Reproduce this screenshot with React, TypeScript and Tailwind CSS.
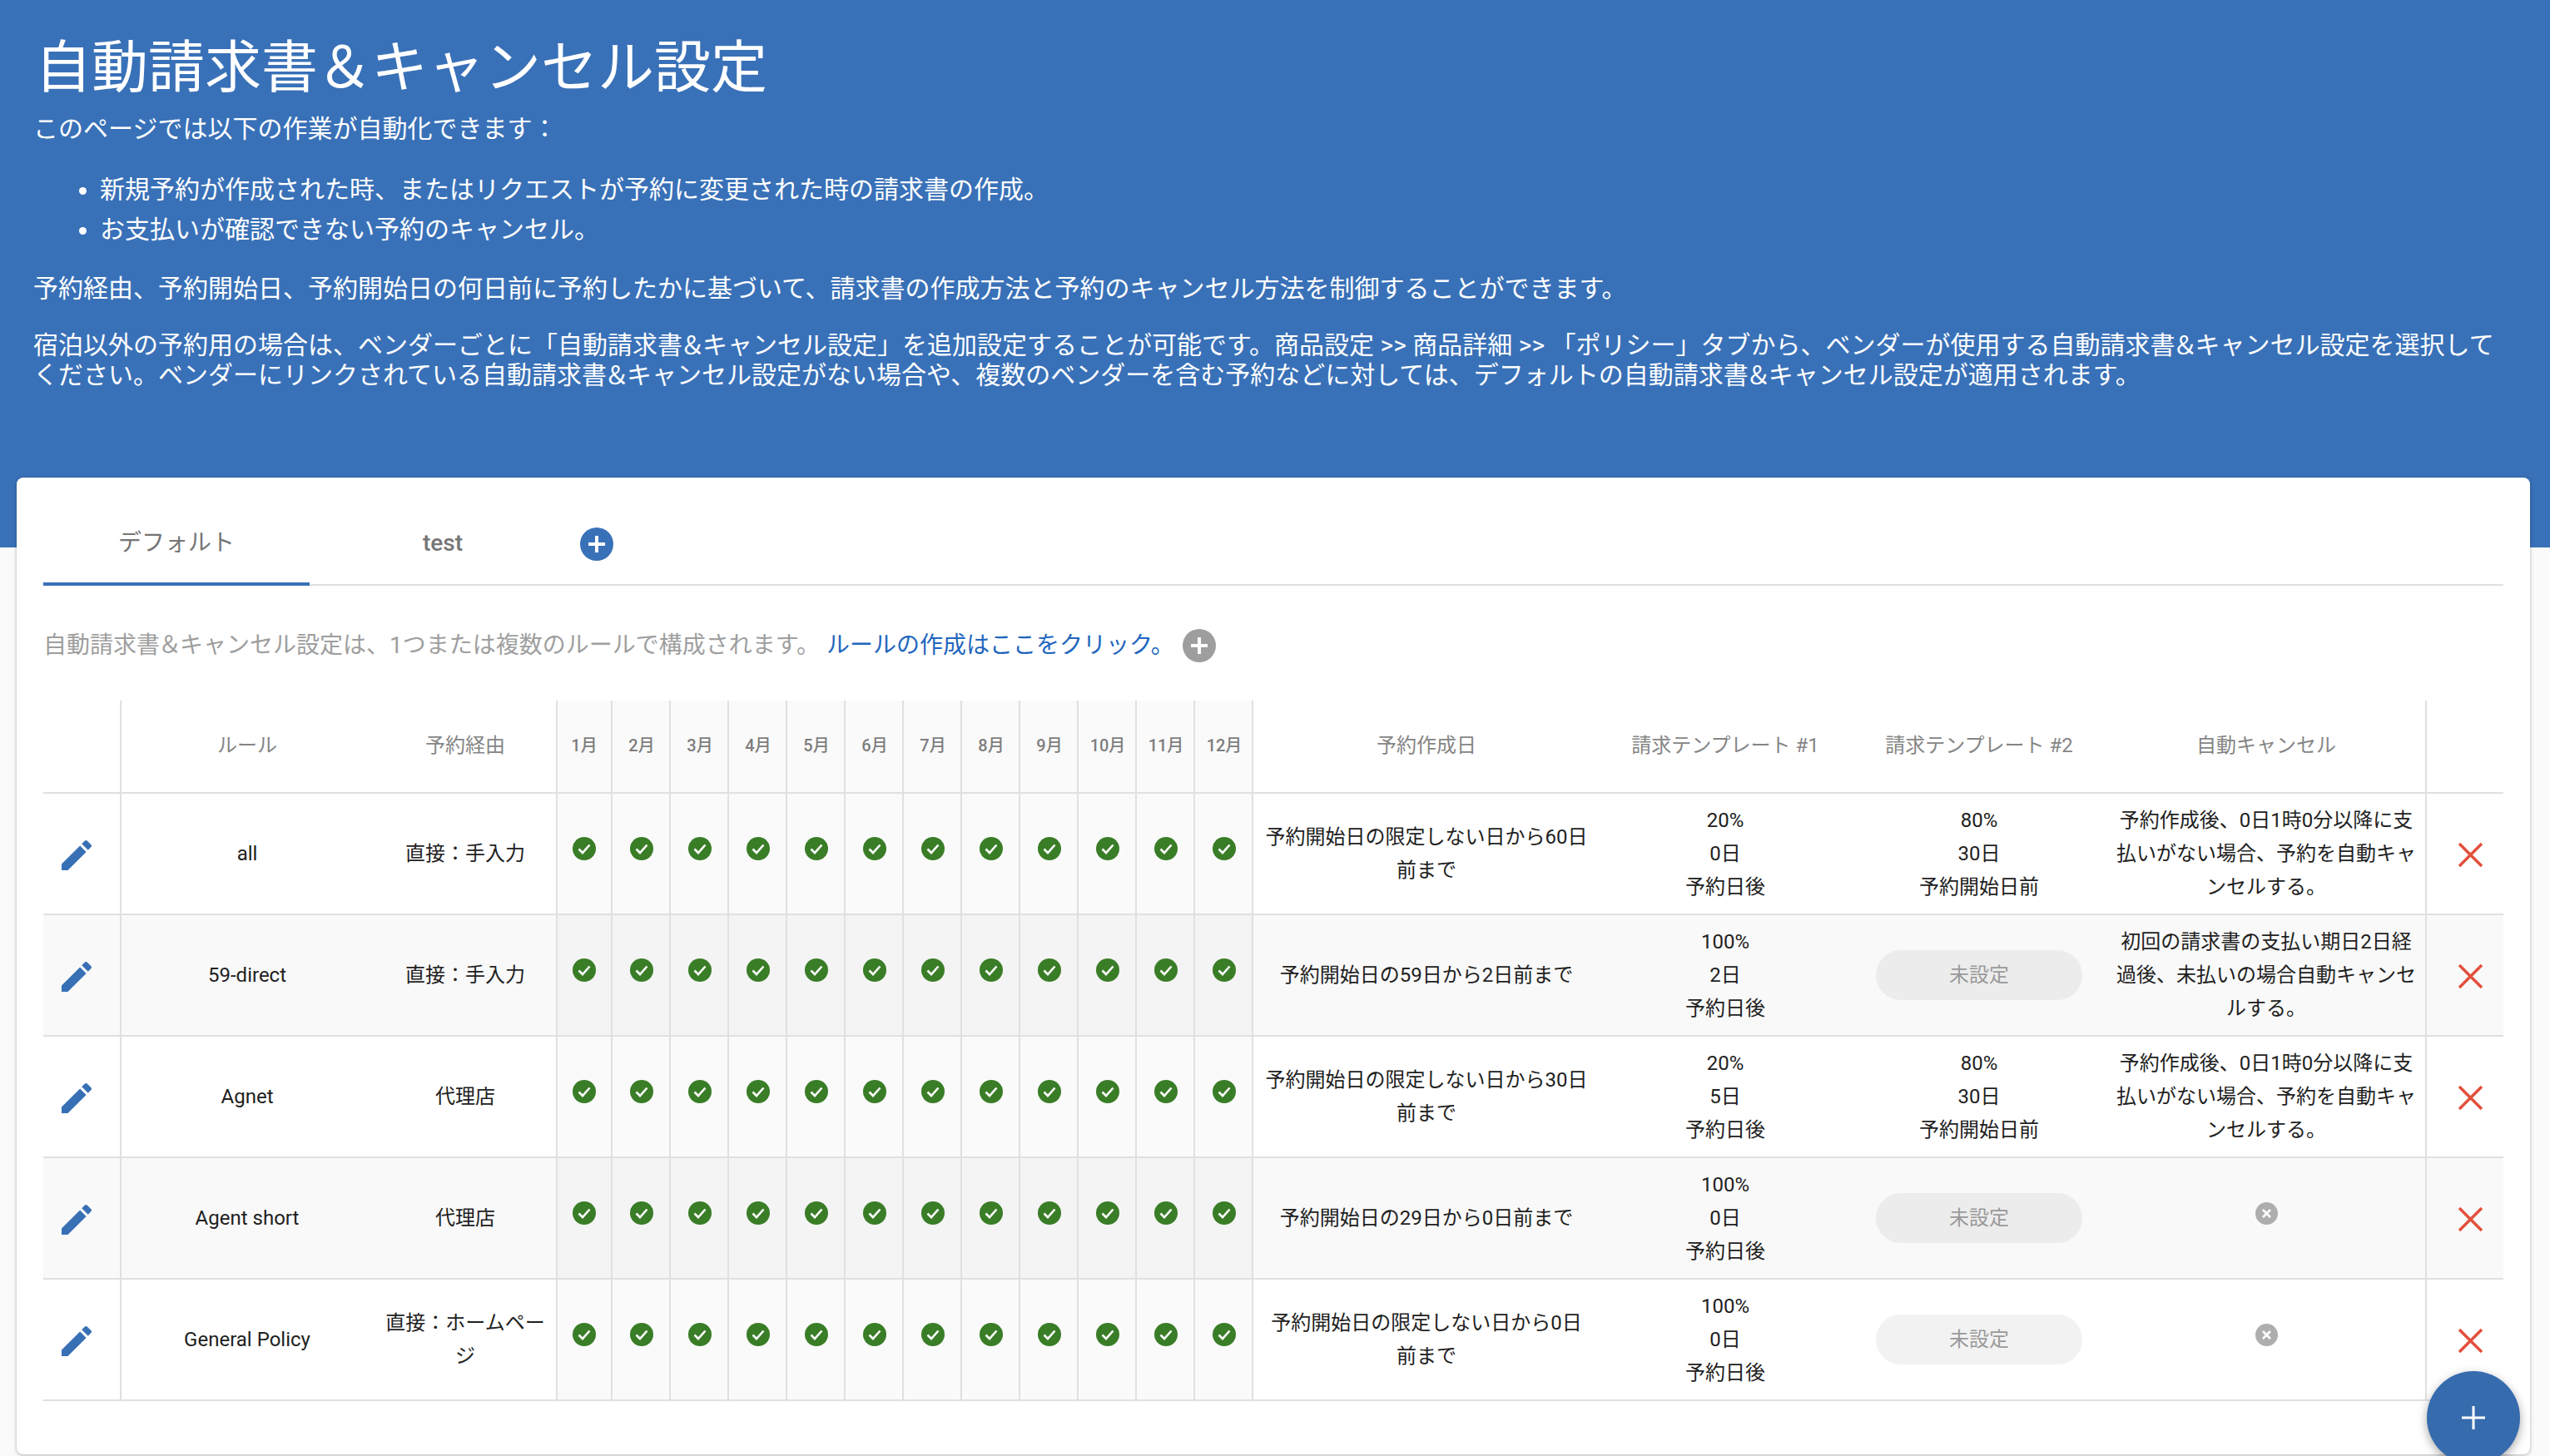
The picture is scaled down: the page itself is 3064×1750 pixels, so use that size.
const FONT = "font-['Roboto','Noto_Sans_CJK_JP',sans-serif]";

const months = ["1月", "2月", "3月", "4月", "5月", "6月", "7月", "8月", "9月", "10月", "11月", "12月"];

type Rule = {
  name: string;
  route: string;
  created: string;
  t1: string[];
  t2: string[] | null;
  cancel: string | null;
};

const rules: Rule[] = [
  { name: "all", route: "直接：手入力", created: "予約開始日の限定しない日から60日前まで", t1: ["20%", "0日", "予約日後"], t2: ["80%", "30日", "予約開始日前"], cancel: "予約作成後、0日1時0分以降に支払いがない場合、予約を自動キャンセルする。" },
  { name: "59-direct", route: "直接：手入力", created: "予約開始日の59日から2日前まで", t1: ["100%", "2日", "予約日後"], t2: null, cancel: "初回の請求書の支払い期日2日経過後、未払いの場合自動キャンセルする。" },
  { name: "Agnet", route: "代理店", created: "予約開始日の限定しない日から30日前まで", t1: ["20%", "5日", "予約日後"], t2: ["80%", "30日", "予約開始日前"], cancel: "予約作成後、0日1時0分以降に支払いがない場合、予約を自動キャンセルする。" },
  { name: "Agent short", route: "代理店", created: "予約開始日の29日から0日前まで", t1: ["100%", "0日", "予約日後"], t2: null, cancel: null },
  { name: "General Policy", route: "直接：ホームページ", created: "予約開始日の限定しない日から0日前まで", t1: ["100%", "0日", "予約日後"], t2: null, cancel: null },
];

function Amp() {
  return <span className="mx-[-3px]">＆</span>;
}

function PlusCircle({ color }: { color: string }) {
  return (
    <svg width="40" height="40" viewBox="0 0 40 40" className="block shrink-0">
      <circle cx="20" cy="20" r="20" fill={color} />
      <path d="M20 10v20M10 20h20" stroke="#fff" strokeWidth="4" />
    </svg>
  );
}

function Check() {
  return (
    <svg width="28" height="28" viewBox="0 0 28 28" className="block mx-auto">
      <circle cx="14" cy="14" r="14" fill="#397d27" />
      <path d="M7.5 14.5l4.5 4.5 8.5-9.5" fill="none" stroke="#fff" strokeWidth="2.6" />
    </svg>
  );
}

function GreyX() {
  return (
    <svg width="27" height="27" viewBox="0 0 27 27" className="block mx-auto">
      <circle cx="13.5" cy="13.5" r="13.5" fill="#aeaeae" />
      <path d="M9 9l9 9M18 9l-9 9" fill="none" stroke="#fff" strokeWidth="2.6" />
    </svg>
  );
}

function Pencil() {
  return (
    <svg width="48" height="48" viewBox="0 0 24 24" className="block mx-auto" fill="#3870b5">
      <path d="M3 17.25V21h3.75L17.81 9.94l-3.75-3.75L3 17.25zM20.71 7.04c.39-.39.39-1.02 0-1.41l-2.34-2.34c-.39-.39-1.02-.39-1.41 0l-1.83 1.83 3.75 3.75 1.83-1.83z" />
    </svg>
  );
}

function RedX() {
  return (
    <svg width="31" height="29" viewBox="0 0 31 29" className="block mx-auto">
      <path d="M2 1l27 27M29 1L2 28" fill="none" stroke="#e2503c" strokeWidth="3.5" />
    </svg>
  );
}

function Lines({ items }: { items: string[] }) {
  return (
    <>
      {items.map((t) => (
        <div key={t}>{t}</div>
      ))}
    </>
  );
}

export default function App() {
  const thMain = "border-b-2 border-[#e0e0e0] font-normal text-[24px] text-[#858585] text-center align-middle pb-[2px]";
  const tdMain = "border-b-2 border-[#e0e0e0] text-center align-middle text-[24px] leading-[40px] text-[#212121] px-[14px]";
  return (
    <div className={`${FONT} relative h-[1750px] w-full overflow-hidden bg-[#fafafa]`}>
      <header className="h-[658px] bg-[#3971b8] px-[42px] pt-[42px] text-white">
        <h1 className="text-[68px] leading-[80px] font-normal">
          自動請求書<span className="mx-[-2px]">＆</span>キャンセル設定
        </h1>
        <p className="mt-[15px] ml-[-2px] text-[30px] leading-[36px]">このページでは以下の作業が自動化できます：</p>
        <ul className="mt-[37px] list-disc pl-[78px] text-[30px] leading-[36px]">
          <li className="mb-[12px]">新規予約が作成された時、またはリクエストが予約に変更された時の請求書の作成。</li>
          <li>お支払いが確認できない予約のキャンセル。</li>
        </ul>
        <p className="mt-[35px] ml-[-2px] text-[30px] leading-[36px]">予約経由、予約開始日、予約開始日の何日前に予約したかに基づいて、請求書の作成方法と予約のキャンセル方法を制御することができます。</p>
        <p className="mt-[32px] ml-[-2px] text-[30px] leading-[36px]">
          宿泊以外の予約用の場合は、ベンダーごとに「自動請求書<Amp />キャンセル設定」を追加設定することが可能です。商品設定 &gt;&gt; 商品詳細 &gt;&gt; 「ポリシー」タブから、ベンダーが使用する自動請求書<Amp />キャンセル設定を選択して
          <br />
          ください。ベンダーにリンクされている自動請求書<Amp />キャンセル設定がない場合や、複数のベンダーを含む予約などに対しては、デフォルトの自動請求書<Amp />キャンセル設定が適用されます。
        </p>
      </header>

      <main className="ml-[20px] mr-[24px] mt-[-84px] h-[1174px] rounded-[8px] bg-white px-[32px] pt-[30px] shadow-[0_1px_4px_rgba(0,0,0,0.3)] relative">
        <div className="flex h-[100px] items-stretch border-b-2 border-[#e0e0e0]">
          <div className="flex w-[320px] items-center justify-center border-b-4 border-[#3971b8] mb-[-2px] pt-[2px] text-[28px] text-[#757575]">デフォルト</div>
          <div className="flex w-[320px] items-center justify-center text-[28px] font-medium text-[#757575]">test</div>
          <div className="flex items-center pl-[5px] pt-[2px]">
            <PlusCircle color="#3971b8" />
          </div>
        </div>

        <div className="mt-[52px] mb-[46px] flex h-[40px] items-center text-[28px] text-[#9e9e9e]">
          <span>
            自動請求書<span className="mx-[-2px]">＆</span>キャンセル設定は、1つまたは複数のルールで構成されます。
          </span>
          <span className="text-[#1f66bd] ml-[8px]">ルールの作成はここをクリック。</span>
          <span className="ml-[10px]"><PlusCircle color="#9e9e9e" /></span>
        </div>

        <table className="w-[2956px] table-fixed border-separate border-spacing-0">
          <colgroup>
            <col className="w-[94px]" />
            <col className="w-[302px]" />
            <col className="w-[222px]" />
            <col className="w-[66px]" />
            {months.slice(1).map((m) => (
              <col key={m} className="w-[70px]" />
            ))}
            <col className="w-[416px]" />
            <col className="w-[302px]" />
            <col className="w-[308px]" />
            <col className="w-[384px]" />
            <col className="w-[92px]" />
          </colgroup>
          <thead>
            <tr className="h-[112px]">
              <th className={`${thMain} border-r-2`} />
              <th className={thMain}>ルール</th>
              <th className={`${thMain} border-r-2 pl-[2px]`}>予約経由</th>
              {months.map((m, idx) => (
                <th key={m} className={`border-b-2 border-r-2 border-[#e0e0e0] bg-[#fafafa] text-center align-middle text-[20px] font-medium text-[#7d7d7d] pb-[2px] ${idx > 0 ? "pl-[2px]" : ""}`}>{m}</th>
              ))}
              <th className={thMain}>予約作成日</th>
              <th className={thMain}>請求テンプレート #1</th>
              <th className={thMain}>請求テンプレート #2</th>
              <th className={`${thMain} border-r-2`}>自動キャンセル</th>
              <th className={thMain} />
            </tr>
          </thead>
          <tbody>
            {rules.map((r, i) => {
              const alt = i % 2 === 1;
              return (
                <tr key={r.name} className={`h-[146px] ${alt ? "bg-[#f9f9f9]" : "bg-white"}`}>
                  <td className="border-b-2 border-r-2 border-[#e0e0e0] align-middle pr-[12px] pt-[4px]"><Pencil /></td>
                  <td className={tdMain}>{r.name}</td>
                  <td className="border-b-2 border-r-2 border-[#e0e0e0] text-center align-middle text-[24px] leading-[40px] text-[#212121] pl-[14px] pr-[12px]">{r.route}</td>
                  {months.map((m, idx) => (
                    <td key={m} className={`border-b-2 border-r-2 border-[#e0e0e0] align-middle pb-[12px] ${idx > 0 ? "pl-[2px]" : ""} ${alt ? "bg-[#f4f4f4]" : "bg-[#fafafa]"}`}>
                      <Check />
                    </td>
                  ))}
                  <td className={tdMain}>{r.created}</td>
                  <td className={tdMain}><Lines items={r.t1} /></td>
                  <td className={tdMain}>
                    {r.t2 ? (
                      <Lines items={r.t2} />
                    ) : (
                      <div className={`mx-auto flex h-[60px] w-[248px] items-center justify-center rounded-[30px] text-[#9a9a9a] ${alt ? "bg-[#ececec]" : "bg-[#f2f2f2]"}`}>未設定</div>
                    )}
                  </td>
                  <td className="border-b-2 border-r-2 border-[#e0e0e0] text-center align-middle text-[24px] leading-[40px] text-[#212121] px-[11px]">
                    {r.cancel ? r.cancel : <div className="pb-[12px]"><GreyX /></div>}
                  </td>
                  <td className="border-b-2 border-[#e0e0e0] align-middle pl-[12px] pt-[2px]"><RedX /></td>
                </tr>
              );
            })}
          </tbody>
        </table>
      </main>

      <button className="absolute left-[2916px] top-[1648px] flex h-[112px] w-[112px] items-center justify-center rounded-full bg-[#366bae] shadow-[0_4px_12px_rgba(0,0,0,0.35)]">
        <svg width="28" height="28" viewBox="0 0 28 28">
          <path d="M14 0v28M0 14h28" stroke="#fff" strokeWidth="3" />
        </svg>
      </button>
    </div>
  );
}
